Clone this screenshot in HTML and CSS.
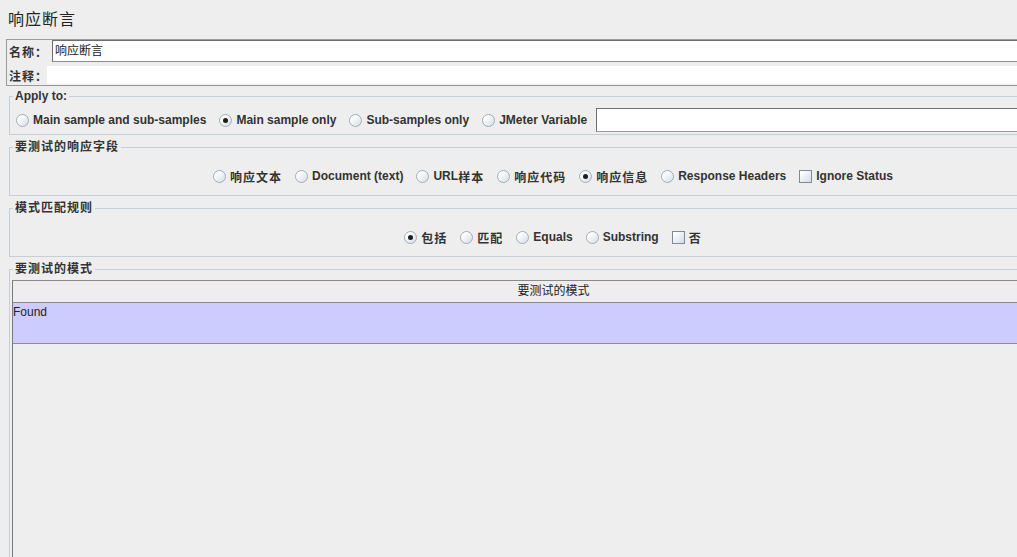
FILE: index.html
```html
<!DOCTYPE html>
<html lang="zh">
<head>
<meta charset="utf-8">
<title>响应断言</title>
<link rel="stylesheet" href="styles.css">
</head>
<body>
<div class="page">
  <div class="title">响应断言</div>

  <div class="name-panel">
    <div class="name-row">
      <span class="lbl lbl-name">名称：</span>
      <div class="field field-name">响应断言</div>
    </div>
    <div class="name-row comment-row">
      <span class="lbl lbl-comment">注释：</span>
      <div class="field field-comment"></div>
    </div>
  </div>

  <fieldset class="group group-apply">
    <legend>Apply to:</legend>
    <div class="opts opts-left">
      <span class="opt"><span class="radio"></span>Main sample and sub-samples</span>
      <span class="opt"><span class="radio on"></span>Main sample only</span>
      <span class="opt"><span class="radio"></span>Sub-samples only</span>
      <span class="opt"><span class="radio"></span>JMeter Variable</span>
      <div class="field field-var"></div>
    </div>
  </fieldset>

  <fieldset class="group group-center">
    <legend class="cn">要测试的响应字段</legend>
    <div class="opts opts-center">
      <span class="opt"><span class="radio"></span><span class="cn">响应文本</span></span>
      <span class="opt"><span class="radio"></span>Document (text)</span>
      <span class="opt"><span class="radio"></span>URL<span class="cn">样本</span></span>
      <span class="opt"><span class="radio"></span><span class="cn">响应代码</span></span>
      <span class="opt"><span class="radio on"></span><span class="cn">响应信息</span></span>
      <span class="opt"><span class="radio"></span>Response Headers</span>
      <span class="opt"><span class="check"></span>Ignore Status</span>
    </div>
  </fieldset>

  <fieldset class="group group-center">
    <legend class="cn">模式匹配规则</legend>
    <div class="opts opts-center">
      <span class="opt"><span class="radio on"></span><span class="cn">包括</span></span>
      <span class="opt"><span class="radio"></span><span class="cn">匹配</span></span>
      <span class="opt"><span class="radio"></span>Equals</span>
      <span class="opt"><span class="radio"></span>Substring</span>
      <span class="opt"><span class="check"></span><span class="cn">否</span></span>
    </div>
  </fieldset>

  <fieldset class="group group-table">
    <legend class="cn">要测试的模式</legend>
    <div class="table">
      <div class="thead">要测试的模式</div>
      <div class="trow selected">Found</div>
    </div>
  </fieldset>
</div>
</body>
</html>
```

FILE: styles.css
```css
html, body {
  margin: 0;
  padding: 0;
  background: #eeeeee;
  overflow: hidden;
}

body {
  width: 1017px;
  height: 557px;
  font-family: "Liberation Sans", "Noto Sans CJK SC", sans-serif;
  font-size: 12px;
  color: #333333;
}

.page {
  width: 1100px;
}

.cn {
  letter-spacing: 1px;
}

.title {
  height: 29px;
  padding: 10px 0 0 8px;
  font-size: 16px;
  line-height: 20px;
  letter-spacing: 1px;
  color: #222222;
}

/* name / comment panel */
.name-panel {
  margin-left: 6px;
  border: 1px solid #9a9a9a;
  border-right: none;
}

.name-row {
  display: flex;
  align-items: center;
  height: 22px;
}

.comment-row {
  height: 18px;
  padding: 4px 0 1px;
}

.lbl {
  font-weight: bold;
  padding-left: 2px;
  box-sizing: border-box;
  white-space: nowrap;
  letter-spacing: 1px;
}

.lbl-name { width: 45px; }
.lbl-comment { width: 40px; }

.field {
  flex: 1;
  background: #ffffff;
  box-sizing: border-box;
}

.field-name {
  height: 22px;
  border: 1px solid #8c8c8c;
  border-top-color: #6e6e6e;
  border-left-color: #6e6e6e;
  padding-left: 2px;
  line-height: 20px;
  color: #222222;
}

.field-comment {
  height: 18px;
}

/* titled groups */
.group {
  margin: 5px 3px 0 9px;
  padding: 0;
  border: 1px solid #c6cfd7;
  min-width: 0;
}

.group legend {
  margin-left: 3px;
  padding: 0 2px;
  font-weight: bold;
  line-height: 14px;
  color: #333333;
}

.group-apply {
  margin-top: 3px;
  padding-top: 5px;
  padding-bottom: 2px;
}

.group-center {
  padding: 12px 0 9px;
}

.group-table {
  padding-top: 4px;
  height: 300px;
}

.opts {
  display: flex;
  align-items: center;
  gap: 13px;
  font-weight: bold;
  white-space: nowrap;
}

.opts-left {
  height: 24px;
  padding-left: 6px;
}

.opts-center {
  height: 20px;
  justify-content: center;
}

.opt {
  display: flex;
  align-items: center;
}

.radio,
.check {
  flex: none;
  width: 13px;
  height: 13px;
  box-sizing: border-box;
  margin-right: 4px;
  display: flex;
  align-items: center;
  justify-content: center;
}

.radio {
  border-radius: 50%;
  border: 1px solid #a3adb7;
  background: linear-gradient(135deg, #ffffff 20%, #d5dde6 100%);
}

.radio.on::after {
  content: "";
  width: 5px;
  height: 5px;
  border-radius: 50%;
  background: #1e1e1e;
}

.check {
  border: 1px solid #7d8a97;
  background: linear-gradient(135deg, #ffffff 10%, #d3dce6 100%);
}

.field-var {
  height: 24px;
  margin-left: -4px;
  border: 1px solid #9a9a9a;
  border-top-color: #707070;
  border-left-color: #707070;
}

/* table */
.table {
  height: 300px;
  margin: 0 2px;
  border-top: 1px solid #8a8a8a;
  border-left: 1px solid #7a7a7a;
  box-sizing: border-box;
}

.thead {
  height: 22px;
  line-height: 21px;
  text-align: center;
  background: #efeded;
  border-bottom: 1px solid #8a8a8a;
  box-sizing: border-box;
  color: #222222;
}

.trow {
  height: 41px;
  box-sizing: border-box;
  padding: 2px 0 0 0;
  line-height: 14px;
  color: #222222;
}

.trow.selected {
  background: #ccccff;
  border-bottom: 1px solid #8a8a9a;
}
```
